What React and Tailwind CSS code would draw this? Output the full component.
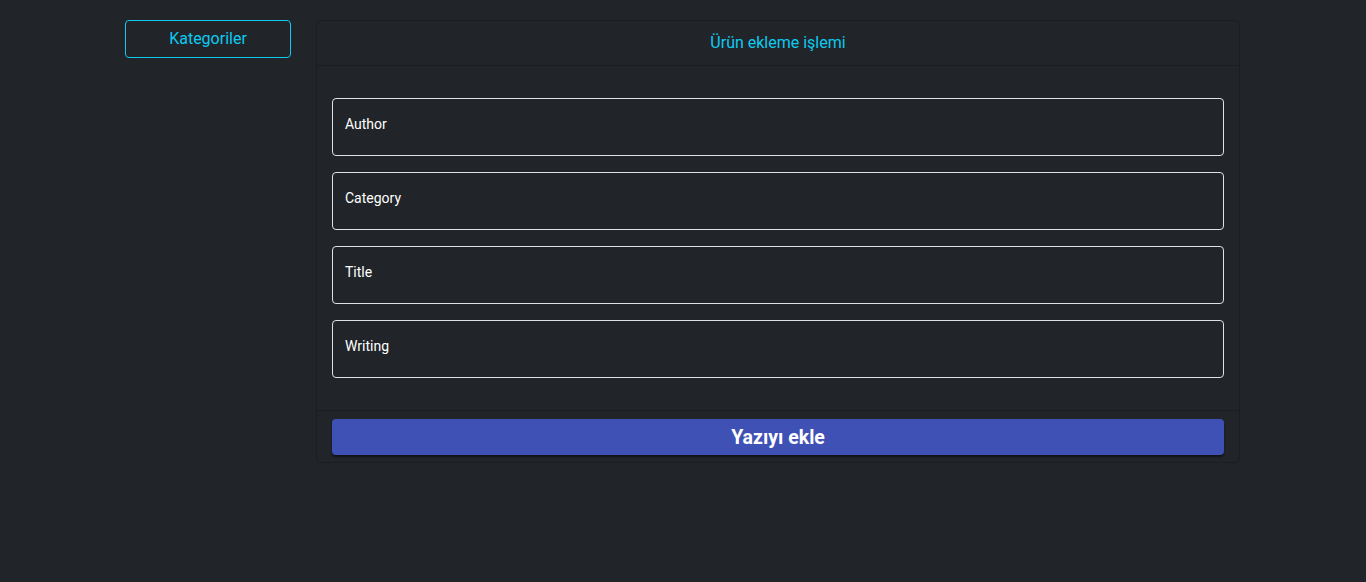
export default function App() {
  const fields = ["Author", "Category", "Title", "Writing"];
  return (
    <div className="min-h-[582px] w-full bg-[#212529] font-['Roboto',sans-serif]">
      <div className="flex items-start gap-[25px] pl-[125px] pt-[20px]">
        <button className="w-[166px] h-[38px] rounded-[4px] border border-[#0dcaf0] text-[#0dcaf0] text-[16px] leading-none flex items-center justify-center">
          Kategoriler
        </button>
        <div className="w-[924px] rounded-[6px] border border-[#1b1e21] bg-[#212529] flex flex-col">
          <div className="h-[45px] border-b border-[#1b1e21] flex items-center justify-center text-[#0dcaf0] text-[16px]">
            Ürün ekleme işlemi
          </div>
          <div className="px-[15px] py-[32px] flex flex-col gap-[16px]">
            {fields.map((f) => (
              <div
                key={f}
                className="h-[58px] rounded-[4px] border border-[#dee2e6] flex items-center px-[12px] pb-[6px] text-white text-[14px]"
              >
                {f}
              </div>
            ))}
          </div>
          <div className="border-t border-[#1b1e21] px-[15px] pt-[8px] pb-[7px]">
            <button className="w-full h-[36px] rounded-[4px] bg-[#3f51b5] text-white text-[19.5px] font-bold shadow-[0_2px_2px_rgba(0,0,0,0.5)] flex items-center justify-center pt-[2px]">
              Yazıyı ekle
            </button>
          </div>
        </div>
      </div>
    </div>
  );
}
